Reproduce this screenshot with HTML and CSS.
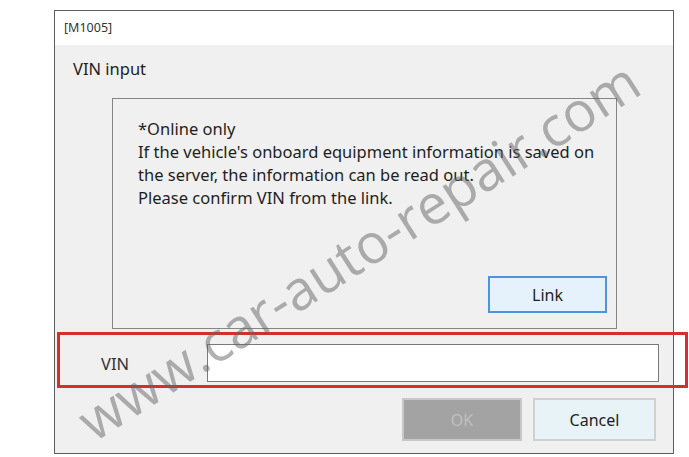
FILE: index.html
```html
<!DOCTYPE html>
<html lang="en">
<head>
  <meta charset="UTF-8">
  <title>VIN input</title>
  <link rel="stylesheet" href="styles.css">
</head>
<body>
  <div class="dialog">
    <div class="titlebar">[M1005]</div>
    <div class="heading">VIN input</div>

    <div class="info-box">
      <div class="info-text">
        *Online only<br>
        If the vehicle's onboard equipment information is saved on<br>
        the server, the information can be read out.<br>
        Please confirm VIN from the link.
      </div>
      <button class="btn btn-link">Link</button>
    </div>

    <div class="vin-row">
      <div class="highlight"></div>
      <label class="vin-label" for="vin">VIN</label>
      <input class="vin-input" id="vin" type="text">
    </div>

    <div class="actions">
      <button class="btn btn-ok" disabled>OK</button>
      <button class="btn btn-cancel">Cancel</button>
    </div>
  </div>

  <div class="watermark">www.car-auto-repair.com</div>
</body>
</html>
```

FILE: styles.css
```css
body {
  margin: 0;
  background-color: #fff;
  font-family: "Noto Sans", "Open Sans", sans-serif;
  color: #1e1e1e;
  position: relative;
  width: 689px;
  height: 457px;
  overflow: hidden;
}
.dialog {
  margin: 10px 0 0 54px;
  width: 620px;
  height: 444px;
  box-sizing: border-box;
  border: 1px solid #5c5c5c;
  background-color: #f0f0f0;
  display: flex;
  flex-direction: column;
}
.titlebar {
  height: 34px;
  line-height: 34px;
  background-color: #fff;
  padding-left: 9px;
  font-size: 12.5px;
  color: #333;
}
.heading {
  margin: 13px 0 0 18px;
  font-size: 16.5px;
  line-height: 22px;
}
.info-box {
  margin: 18px 0 0 57px;
  width: 505px;
  height: 231px;
  box-sizing: border-box;
  border: 1px solid #858585;
  padding: 18px 9px 15px 25px;
  display: flex;
  flex-direction: column;
}
.info-text {
  font-size: 16.5px;
  line-height: 23px;
}
.btn {
  font-family: inherit;
  font-size: 16px;
  box-sizing: border-box;
  cursor: pointer;
  color: #1e1e1e;
}
.btn-link {
  margin-top: auto;
  align-self: flex-end;
  width: 119px;
  height: 37px;
  background-color: #e5f1fb;
  border: 2px solid #4a94e0;
}
.vin-row {
  position: relative;
  margin-top: 15px;
  height: 38px;
  display: flex;
  align-items: center;
}
.highlight {
  position: absolute;
  left: 2px;
  top: -12px;
  width: 631px;
  height: 56px;
  box-sizing: border-box;
  border: 3px solid #d3302b;
  pointer-events: none;
}
.vin-label {
  margin-left: 46px;
  width: 106px;
  font-size: 16.5px;
  color: #333;
}
.vin-input {
  width: 452px;
  height: 38px;
  box-sizing: border-box;
  border: 1px solid #7a7a7a;
  background-color: #fff;
}
.actions {
  margin-top: 16px;
  padding-right: 17px;
  display: flex;
  justify-content: flex-end;
  gap: 11px;
}
.btn-ok {
  width: 120px;
  height: 43px;
  background-color: #a3a3a3;
  border: 2px solid #c8c8c8;
  color: #c0c0c0;
}
.btn-cancel {
  width: 123px;
  height: 43px;
  background-color: #e8f3f8;
  border: 2px solid #d0d0d0;
}
.watermark {
  position: absolute;
  left: 358px;
  top: 250px;
  transform: translate(-50%, -50%) rotate(-32.5deg);
  font-family: "Open Sans", sans-serif;
  font-size: 55px;
  line-height: 60px;
  white-space: nowrap;
  color: rgba(100, 100, 100, 0.5);
  pointer-events: none;
}
```
